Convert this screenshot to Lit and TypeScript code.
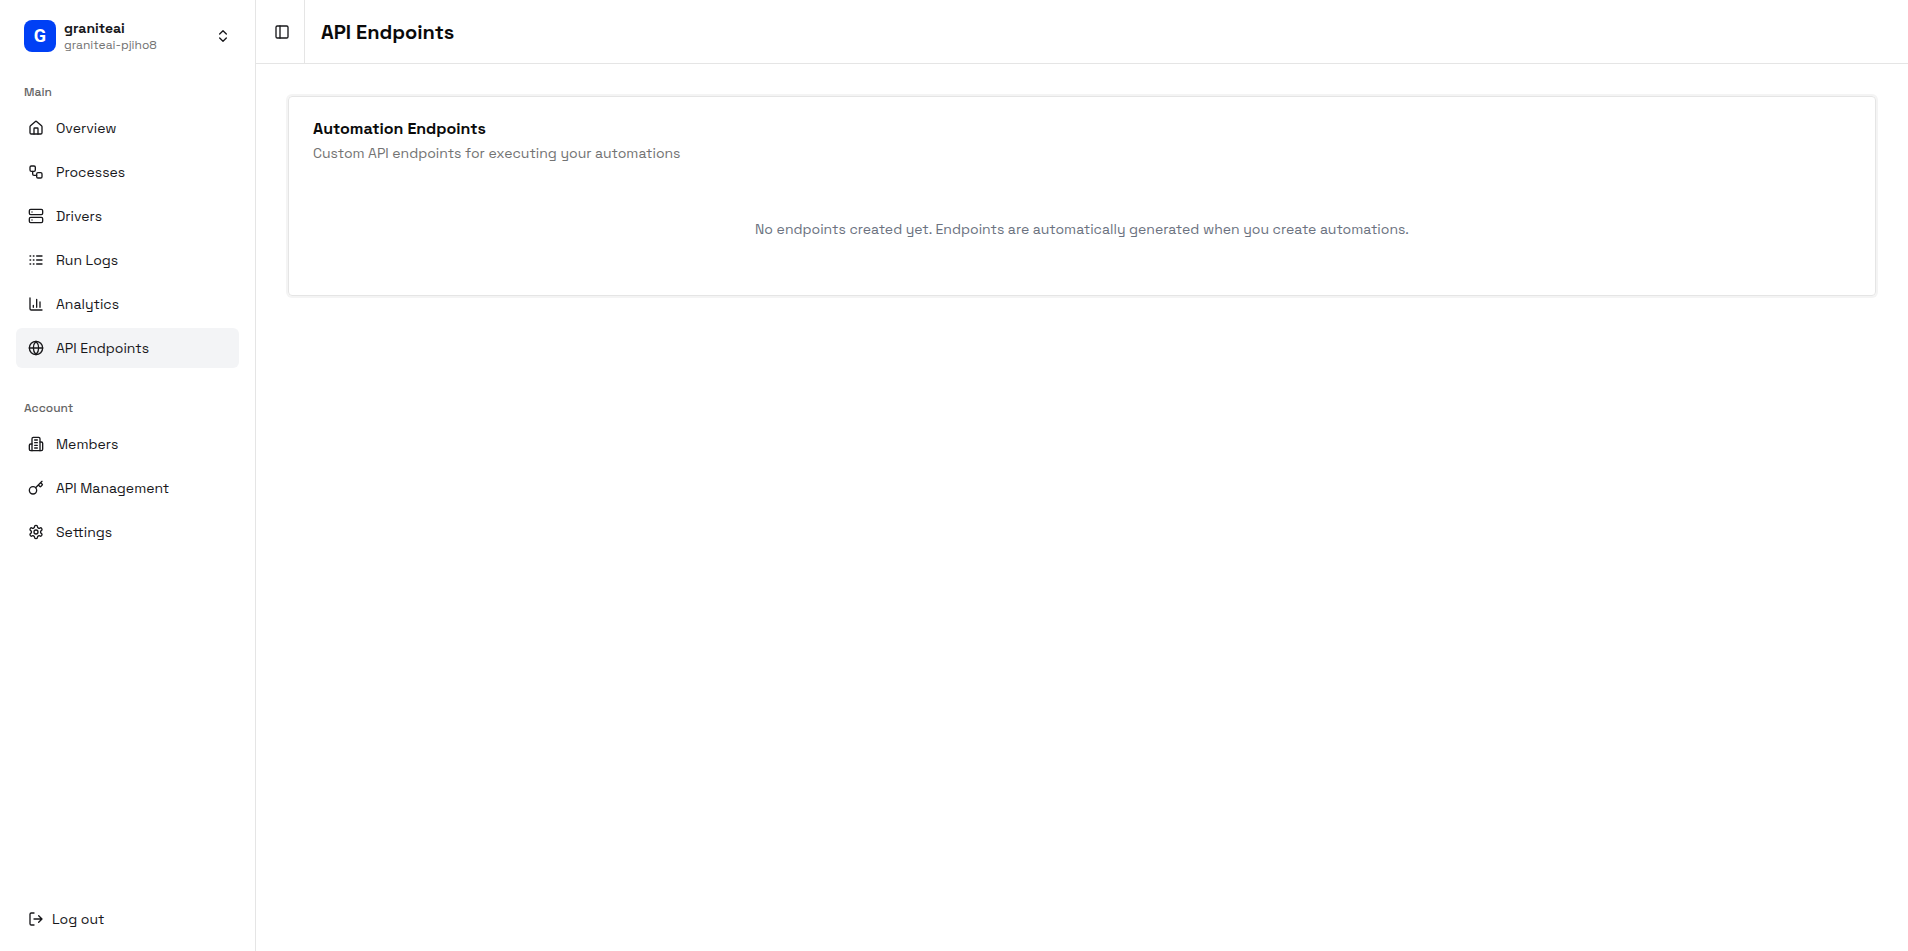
import { LitElement, html, css, svg, type TemplateResult } from "lit";
import { customElement, state } from "lit/decorators.js";

const icons: Record<string, TemplateResult> = {
  home: svg`<path d="M15 21v-8a1 1 0 0 0-1-1h-4a1 1 0 0 0-1 1v8"/><path d="M3 10a2 2 0 0 1 .709-1.528l7-5.999a2 2 0 0 1 2.582 0l7 5.999A2 2 0 0 1 21 10v9a2 2 0 0 1-2 2H5a2 2 0 0 1-2-2z"/>`,
  workflow: svg`<rect width="8" height="8" x="3" y="3" rx="2"/><path d="M7 11v4a2 2 0 0 0 2 2h4"/><rect width="8" height="8" x="13" y="13" rx="2"/>`,
  server: svg`<rect width="20" height="8" x="2" y="2" rx="2"/><rect width="20" height="8" x="2" y="14" rx="2"/><path d="M6 6h.01M6 18h.01"/>`,
  logs: svg`<path d="M13 12h8M13 18h8M13 6h8M3 12h1M3 18h1M3 6h1M8 12h1M8 18h1M8 6h1"/>`,
  chart: svg`<path d="M3 3v16a2 2 0 0 0 2 2h16M18 17V9M13 17V5M8 17v-3"/>`,
  globe: svg`<circle cx="12" cy="12" r="10"/><path d="M12 2a14.5 14.5 0 0 0 0 20 14.5 14.5 0 0 0 0-20M2 12h20"/>`,
  building: svg`<path d="M6 22V4a2 2 0 0 1 2-2h8a2 2 0 0 1 2 2v18Z"/><path d="M6 12H4a2 2 0 0 0-2 2v6a2 2 0 0 0 2 2h2M18 9h2a2 2 0 0 1 2 2v9a2 2 0 0 1-2 2h-2M10 6h4M10 10h4M10 14h4M10 18h4"/>`,
  key: svg`<path d="m15.5 7.5 2.3 2.3a1 1 0 0 0 1.4 0l2.1-2.1a1 1 0 0 0 0-1.4L19 4M21 2l-9.6 9.6"/><circle cx="7.5" cy="15.5" r="5.5"/>`,
  settings: svg`<path d="M12.22 2h-.44a2 2 0 0 0-2 2v.18a2 2 0 0 1-1 1.73l-.43.25a2 2 0 0 1-2 0l-.15-.08a2 2 0 0 0-2.73.73l-.22.38a2 2 0 0 0 .73 2.73l.15.1a2 2 0 0 1 1 1.72v.51a2 2 0 0 1-1 1.74l-.15.09a2 2 0 0 0-.73 2.73l.22.38a2 2 0 0 0 2.73.73l.15-.08a2 2 0 0 1 2 0l.43.25a2 2 0 0 1 1 1.73V20a2 2 0 0 0 2 2h.44a2 2 0 0 0 2-2v-.18a2 2 0 0 1 1-1.73l.43-.25a2 2 0 0 1 2 0l.15.08a2 2 0 0 0 2.73-.73l.22-.39a2 2 0 0 0-.73-2.73l-.15-.08a2 2 0 0 1-1-1.74v-.5a2 2 0 0 1 1-1.74l.15-.09a2 2 0 0 0 .73-2.73l-.22-.38a2 2 0 0 0-2.73-.73l-.15.08a2 2 0 0 1-2 0l-.43-.25a2 2 0 0 1-1-1.73V4a2 2 0 0 0-2-2z"/><circle cx="12" cy="12" r="3"/>`,
  logout: svg`<path d="M9 21H5a2 2 0 0 1-2-2V5a2 2 0 0 1 2-2h4M16 17l5-5-5-5M21 12H9"/>`,
  chevrons: svg`<path d="m7 15 5 5 5-5M7 9l5-5 5 5"/>`,
  panel: svg`<rect width="18" height="18" x="3" y="3" rx="2"/><path d="M9 3v18"/>`,
};

const icon = (name: string) => html`<svg
  class="icon"
  viewBox="0 0 24 24"
  aria-hidden="true"
>${icons[name]}</svg>`;

const groups = [
  {
    label: "Main",
    items: [
      { name: "Overview", icon: "home" },
      { name: "Processes", icon: "workflow" },
      { name: "Drivers", icon: "server" },
      { name: "Run Logs", icon: "logs" },
      { name: "Analytics", icon: "chart" },
      { name: "API Endpoints", icon: "globe" },
    ],
  },
  {
    label: "Account",
    items: [
      { name: "Members", icon: "building" },
      { name: "API Management", icon: "key" },
      { name: "Settings", icon: "settings" },
    ],
  },
];

@customElement("app-root")
export class AppRoot extends LitElement {
  @state() private sidebarOpen = true;

  static styles = css`
    :host {
      display: flex;
      min-height: 100vh;
      background: #fff;
      color: #18181b;
      font-family: "Space Grotesk", Inter, sans-serif;
      font-size: 14px;
      line-height: 20px;
    }
    * {
      box-sizing: border-box;
    }
    h1, h2, h3, p, ul {
      margin: 0;
      padding: 0;
    }
    button {
      border: 0;
      background: none;
      padding: 0;
      font: inherit;
      color: inherit;
      text-align: left;
      cursor: pointer;
    }
    .icon {
      width: 16px;
      height: 16px;
      flex: none;
      fill: none;
      stroke: currentColor;
      stroke-width: 2;
      stroke-linecap: round;
      stroke-linejoin: round;
    }
    .sidebar {
      display: flex;
      flex-direction: column;
      flex: none;
      width: 256px;
      padding: 8px 16px 12px;
      border-right: 1px solid #e5e5e5;
    }
    .team {
      display: flex;
      align-items: center;
      gap: 8px;
      height: 56px;
      padding: 0 8px;
    }
    .logo {
      display: grid;
      place-items: center;
      width: 32px;
      height: 32px;
      border-radius: 8px;
      background: #0040f5;
      color: #fff;
      font-family: Roboto, sans-serif;
      font-size: 18px;
      font-weight: 700;
    }
    .names {
      display: grid;
      flex: 1;
      min-width: 0;
    }
    .team-name {
      font-weight: 600;
      line-height: 18px;
    }
    .team-slug {
      font-size: 12px;
      line-height: 16px;
      color: #737373;
    }
    .nav {
      display: flex;
      flex-direction: column;
      gap: 24px;
      padding-top: 12px;
      flex: 1;
    }
    .group-label {
      padding: 0 8px;
      font-size: 12px;
      line-height: 32px;
      font-weight: 500;
      color: #666;
    }
    .list {
      display: grid;
      gap: 4px;
      list-style: none;
    }
    .item {
      display: flex;
      align-items: center;
      gap: 12px;
      height: 40px;
      padding: 0 12px;
      border-radius: 6px;
      color: inherit;
      text-decoration: none;
    }
    .item:hover,
    .item.active {
      background: #f3f4f6;
    }
    .logout {
      gap: 8px;
    }
    .main {
      flex: 1;
      min-width: 0;
    }
    .header {
      display: flex;
      height: 64px;
      border-bottom: 1px solid #e5e5e5;
    }
    .toggle {
      display: grid;
      place-items: center;
      width: 49px;
      padding-left: 4px;
      border-right: 1px solid #e5e5e5;
    }
    .title {
      align-self: center;
      padding-left: 16px;
      font-size: 20px;
      line-height: 28px;
      font-weight: 600;
      color: #0a0a0a;
    }
    .content {
      padding: 32px;
    }
    .card {
      padding: 20px 24px 24px;
      border: 1px solid #e5e5e5;
      border-radius: 4px;
      box-shadow: 0 0 0 2px #f4f4f4;
    }
    .card-title {
      font-size: 16px;
      line-height: 24px;
      font-weight: 600;
      color: #0a0a0a;
    }
    .card-text {
      padding-top: 2px;
      color: #737373;
    }
    .empty {
      padding: 56px 0 32px;
      text-align: center;
      color: #6b7280;
    }
  `;

  render() {
    return html`
      ${this.sidebarOpen
        ? html`<aside class="sidebar">
            <button class="team">
              <span class="logo">G</span>
              <span class="names">
                <span class="team-name">graniteai</span>
                <span class="team-slug">graniteai-pjiho8</span>
              </span>
              ${icon("chevrons")}
            </button>
            <nav class="nav">
              ${groups.map(
                (group) => html`<section>
                  <h3 class="group-label">${group.label}</h3>
                  <ul class="list">
                    ${group.items.map(
                      (item) => html`<li>
                        <a class="item ${item.name === "API Endpoints" ? "active" : ""}" href="#">
                          ${icon(item.icon)}<span>${item.name}</span>
                        </a>
                      </li>`
                    )}
                  </ul>
                </section>`
              )}
            </nav>
            <button class="item logout">${icon("logout")}<span>Log out</span></button>
          </aside>`
        : null}
      <main class="main">
        <header class="header">
          <button
            class="toggle"
            aria-label="Toggle sidebar"
            @click=${() => (this.sidebarOpen = !this.sidebarOpen)}
          >
            ${icon("panel")}
          </button>
          <h1 class="title">API Endpoints</h1>
        </header>
        <div class="content">
          <section class="card">
            <h2 class="card-title">Automation Endpoints</h2>
            <p class="card-text">Custom API endpoints for executing your automations</p>
            <p class="empty">
              No endpoints created yet. Endpoints are automatically generated when you create
              automations.
            </p>
          </section>
        </div>
      </main>
    `;
  }
}
